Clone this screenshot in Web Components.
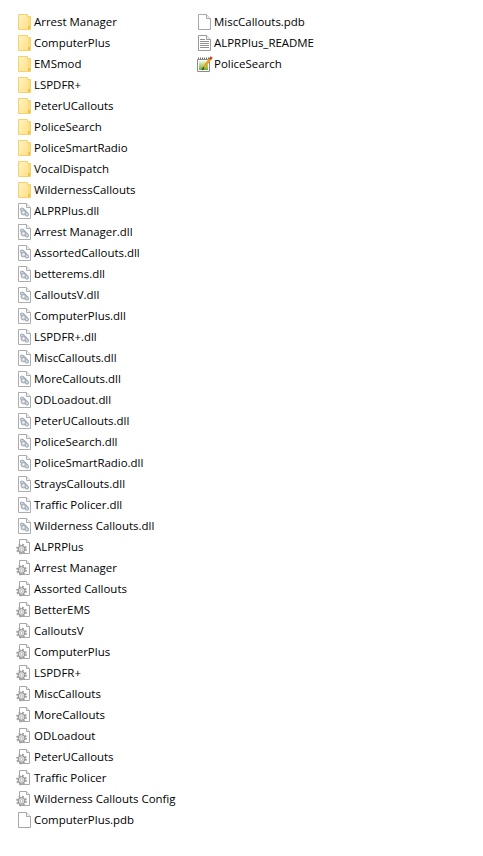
<!DOCTYPE html>
<html>
<head>
<meta charset="utf-8">
<title>Files</title>
<style>
  html, body { margin: 0; background: #fff; }
</style>
</head>
<body>
<file-list>
  <file-column>
    <file-item type="folder">Arrest Manager</file-item>
    <file-item type="folder">ComputerPlus</file-item>
    <file-item type="folder">EMSmod</file-item>
    <file-item type="folder">LSPDFR+</file-item>
    <file-item type="folder">PeterUCallouts</file-item>
    <file-item type="folder">PoliceSearch</file-item>
    <file-item type="folder">PoliceSmartRadio</file-item>
    <file-item type="folder">VocalDispatch</file-item>
    <file-item type="folder">WildernessCallouts</file-item>
    <file-item type="dll">ALPRPlus.dll</file-item>
    <file-item type="dll">Arrest Manager.dll</file-item>
    <file-item type="dll">AssortedCallouts.dll</file-item>
    <file-item type="dll">betterems.dll</file-item>
    <file-item type="dll">CalloutsV.dll</file-item>
    <file-item type="dll">ComputerPlus.dll</file-item>
    <file-item type="dll">LSPDFR+.dll</file-item>
    <file-item type="dll">MiscCallouts.dll</file-item>
    <file-item type="dll">MoreCallouts.dll</file-item>
    <file-item type="dll">ODLoadout.dll</file-item>
    <file-item type="dll">PeterUCallouts.dll</file-item>
    <file-item type="dll">PoliceSearch.dll</file-item>
    <file-item type="dll">PoliceSmartRadio.dll</file-item>
    <file-item type="dll">StraysCallouts.dll</file-item>
    <file-item type="dll">Traffic Policer.dll</file-item>
    <file-item type="dll">Wilderness Callouts.dll</file-item>
    <file-item type="config">ALPRPlus</file-item>
    <file-item type="config">Arrest Manager</file-item>
    <file-item type="config">Assorted Callouts</file-item>
    <file-item type="config">BetterEMS</file-item>
    <file-item type="config">CalloutsV</file-item>
    <file-item type="config">ComputerPlus</file-item>
    <file-item type="config">LSPDFR+</file-item>
    <file-item type="config">MiscCallouts</file-item>
    <file-item type="config">MoreCallouts</file-item>
    <file-item type="config">ODLoadout</file-item>
    <file-item type="config">PeterUCallouts</file-item>
    <file-item type="config">Traffic Policer</file-item>
    <file-item type="config">Wilderness Callouts Config</file-item>
    <file-item type="blank">ComputerPlus.pdb</file-item>
  </file-column>
  <file-column>
    <file-item type="blank">MiscCallouts.pdb</file-item>
    <file-item type="text">ALPRPlus_README</file-item>
    <file-item type="script">PoliceSearch</file-item>
  </file-column>
</file-list>

<script>
  // Page outline shared by the document style icons
  const sheet = `M1.5 .5H9.5L13.5 4.5V15.5H1.5Z`;
  const fold = `M9.5 .5V4.5H13.5`;

  const icons = {
    folder: `
      <defs><linearGradient id="f" x1="0" y1="0" x2="1" y2="1">
        <stop offset="0" stop-color="#fff3c2"/><stop offset="1" stop-color="#ffe28a"/>
      </linearGradient></defs>
      <path d="M1.5 .5H10.5V2.5H13.5V15.5H1.5Z" fill="#ffe69a" stroke="#f2d271"/>
      <path d="M2 1H10V15H2Z" fill="url(#f)"/>
      <path d="M11 3H13V12H11Z" fill="#ffdd7c"/>
      <path d="M11 12H13V15H11Z" fill="#f3c244"/>`,
    dll: `
      <path d="${sheet}" fill="#fff" stroke="#adadad"/>
      <path d="${fold}" fill="#f0f0f0" stroke="#adadad"/>
      <g fill="none" stroke-linecap="round">
        <path d="M5 6.5L10 11.5" stroke="#93a8ba" stroke-width="4"/>
        <path d="M5 6.5L10 11.5" stroke="#d6e2eb" stroke-width="2"/>
      </g>
      <circle cx="6.5" cy="9.5" r="2.5" fill="#c9cdd1" stroke="#9a9ea3" stroke-width=".8"/>
      <circle cx="6.5" cy="9.5" r=".9" fill="#f4f6f8"/>`,
    config: `
      <path d="M2.5 .5H9.5L12.5 3.5V14.5H2.5Z" fill="#fff" stroke="#a8a8a8"/>
      <path d="M9.5 .5V3.5H12.5" fill="#f0f0f0" stroke="#a8a8a8"/>
      <g transform="translate(4.5 10)">
        <circle r="4.2" fill="none" stroke="#a2a2a2" stroke-width="2.4" stroke-dasharray="1.7 1.6"/>
        <circle r="3.4" fill="#dedede" stroke="#8f8f8f"/>
        <circle r="1.3" fill="#fff" stroke="#a5a5a5" stroke-width=".6"/>
      </g>`,
    blank: `
      <path d="${sheet}" fill="#fff" stroke="#a8a8a8"/>
      <path d="${fold}" fill="#f2f2f2" stroke="#a8a8a8"/>`,
    text: `
      <path d="${sheet}" fill="#fff" stroke="#9a9a9a"/>
      <path d="${fold}" fill="#f2f2f2" stroke="#9a9a9a"/>
      <path d="M3 4.5H8M3 6.5H12M3 8.5H12M3 10.5H12M3 12.5H12" stroke="#8f8f8f"/>`,
    script: `
      <defs><linearGradient id="s" x1="0" y1="0" x2="0" y2="1">
        <stop offset="0" stop-color="#f4f6d8"/><stop offset="1" stop-color="#63b32e"/>
      </linearGradient></defs>
      <path d="M.5 3.5H12.5V15.5H.5Z" fill="#fff" stroke="#8c8c8c"/>
      <path d="M1 2.5H12" stroke="#6f6f6f" stroke-width="2" stroke-dasharray="1 1"/>
      <path d="M2 5H11V14H2Z" fill="url(#s)"/>
      <path d="M6.5 12L13.5 2.5" stroke="#e9a21a" stroke-width="2.6"/>
      <path d="M13 3.2L14.6 1" stroke="#c8402a" stroke-width="2.6"/>
      <path d="M5.5 14L6.7 11.4" stroke="#333" stroke-width="1.4"/>`
  };

  const itemTemplate = document.createElement("template");
  itemTemplate.innerHTML = `
    <style>
      :host
      {
        display: flex;
        align-items: center;
        gap: 1px;
        height: 21px;
        font-family: "Open Sans", sans-serif;
        font-size: 11.45px;
        color: #000;
        white-space: nowrap;
      }

      svg
      {
        display: block;
        flex: none;
        width: 16px;
        height: 16px;
        overflow: visible;
      }
    </style>
    <svg viewBox="0 0 16 16"></svg>
    <span><slot></slot></span>
  `;

  class FileItem extends HTMLElement
  {
    constructor()
    {
      super();
      this.attachShadow({mode: "open"});
      this.shadowRoot.appendChild(itemTemplate.content.cloneNode(true));
    }

    connectedCallback()
    {
      const type = this.getAttribute("type") || "blank";
      this.shadowRoot.querySelector("svg").innerHTML = icons[type];
    }
  }

  class FileColumn extends HTMLElement
  {
    constructor()
    {
      super();
      this.attachShadow({mode: "open"});
      this.shadowRoot.innerHTML = `
        <style>
          :host { display: flex; flex-direction: column; width: 180px; }
        </style>
        <slot></slot>
      `;
    }
  }

  class FileList extends HTMLElement
  {
    constructor()
    {
      super();
      this.attachShadow({mode: "open"});
      this.shadowRoot.innerHTML = `
        <style>
          :host { display: flex; align-items: flex-start; padding: 11px 0 0 17px; }
        </style>
        <slot></slot>
      `;
    }
  }

  customElements.define("file-item", FileItem);
  customElements.define("file-column", FileColumn);
  customElements.define("file-list", FileList);
</script>
</body>
</html>
